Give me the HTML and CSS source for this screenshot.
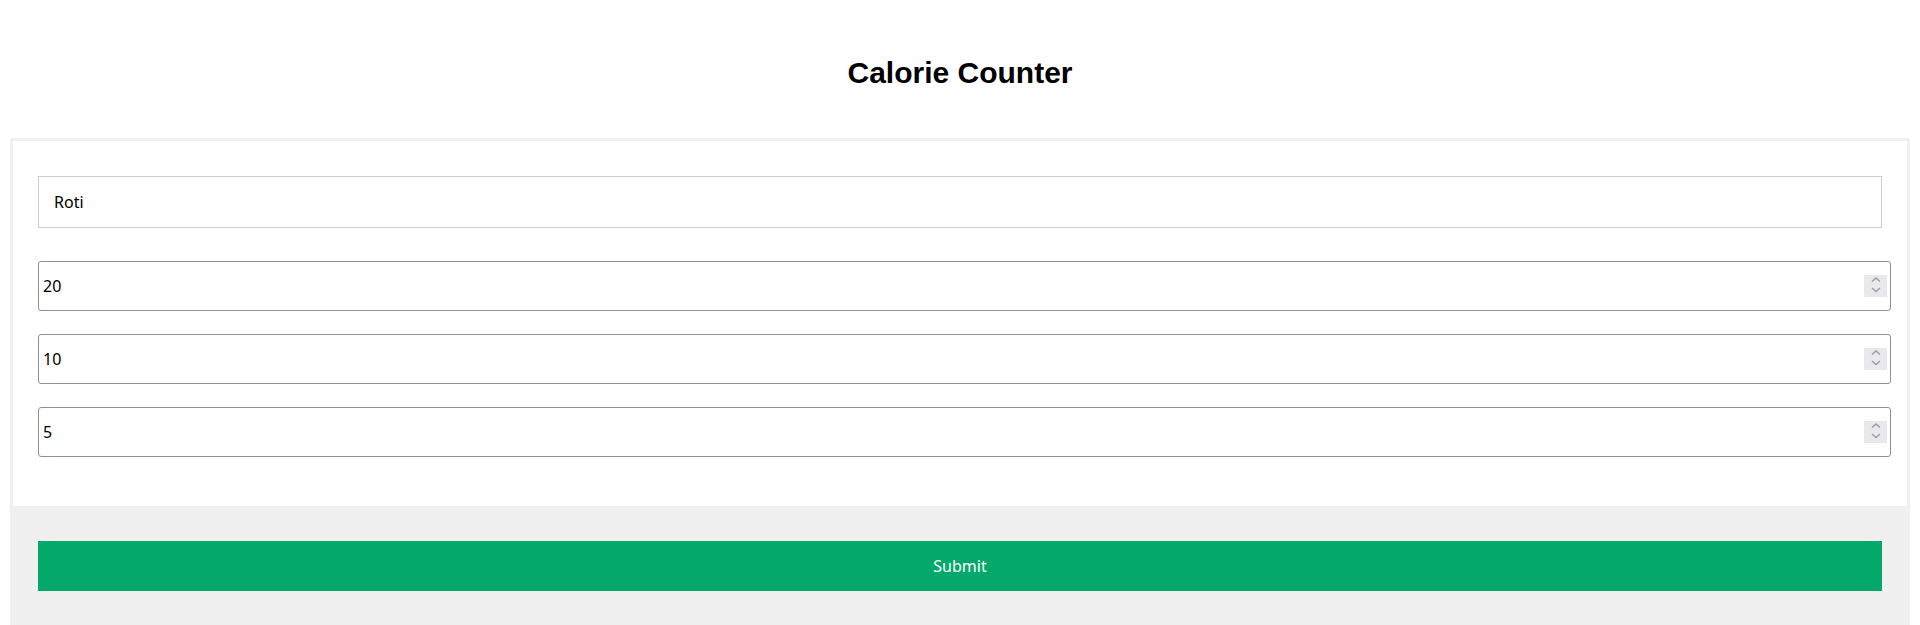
FILE: index.html
```html
<!DOCTYPE html>
<html lang="en">
<head>
<meta charset="utf-8">
<title>Calorie Counter</title>
<link rel="stylesheet" href="styles.css">
</head>
<body>
<header class="header">
  <h1 class="title">Calorie Counter</h1>
</header>
<form class="card">
  <div class="fields">
    <input class="text-input" type="text" value="Roti">
    <div class="num-field">
      <input class="num-input" type="number" value="20">
      <span class="spinner"><svg width="10" height="22" viewBox="0 0 10 22"><path d="M1 6.5 L5 3 L9 6.5" fill="none" stroke="#9a9aa6" stroke-width="1.4"/><path d="M1 13 L5 16.5 L9 13" fill="none" stroke="#9a9aa6" stroke-width="1.4"/></svg></span>
    </div>
    <div class="num-field">
      <input class="num-input" type="number" value="10">
      <span class="spinner"><svg width="10" height="22" viewBox="0 0 10 22"><path d="M1 6.5 L5 3 L9 6.5" fill="none" stroke="#9a9aa6" stroke-width="1.4"/><path d="M1 13 L5 16.5 L9 13" fill="none" stroke="#9a9aa6" stroke-width="1.4"/></svg></span>
    </div>
    <div class="num-field">
      <input class="num-input" type="number" value="5">
      <span class="spinner"><svg width="10" height="22" viewBox="0 0 10 22"><path d="M1 6.5 L5 3 L9 6.5" fill="none" stroke="#9a9aa6" stroke-width="1.4"/><path d="M1 13 L5 16.5 L9 13" fill="none" stroke="#9a9aa6" stroke-width="1.4"/></svg></span>
    </div>
  </div>
  <div class="footer">
    <button class="submit" type="button">Submit</button>
  </div>
</form>
</body>
</html>
```
FILE: styles.css
```css
* { box-sizing: border-box; }
html, body { margin: 0; padding: 0; background: #fff; }
body {
  font-family: "Noto Sans", "Open Sans", sans-serif;
  font-size: 16px;
  color: #000;
}
.header {
  padding: 56px 0 48px;
  text-align: center;
}
.title {
  margin: 0;
  font-family: "Liberation Sans", Arial, sans-serif;
  font-size: 30px;
  font-weight: bold;
  line-height: 34px;
}
.card {
  margin: 0 10px;
  border: 3px solid #f0f0f0;
  border-bottom: 0;
}
.fields {
  display: flex;
  flex-direction: column;
  align-items: flex-start;
  padding: 35px 25px 49px;
}
.text-input {
  width: 100%;
  height: 52px;
  margin: 0 0 33px;
  padding: 0 15px;
  border: 1px solid #cccccc;
  border-radius: 0;
  font-family: inherit;
  font-size: 16px;
  color: #000;
  background: #fff;
  outline: none;
}
.num-field {
  width: calc(100% + 9px);
  height: 50px;
  margin-bottom: 23px;
  display: flex;
  align-items: center;
  border: 1px solid #8f8f9d;
  border-radius: 3px;
  background: #fff;
  padding: 0 3px 0 4px;
}
.num-field:last-child { margin-bottom: 0; }
.num-input {
  flex: 1;
  min-width: 0;
  height: 100%;
  border: 0;
  padding: 0;
  font-family: inherit;
  font-size: 16px;
  color: #000;
  background: transparent;
  outline: none;
  -moz-appearance: textfield;
}
.num-input::-webkit-inner-spin-button,
.num-input::-webkit-outer-spin-button {
  -webkit-appearance: none;
  margin: 0;
}
.spinner {
  width: 23px;
  height: 22px;
  background: #e9e9ed;
  display: flex;
  align-items: center;
  justify-content: center;
}
.footer {
  background: #f0f0f0;
  margin: 0 -3px;
  padding: 35px 28px 34px;
}
.submit {
  display: block;
  width: 100%;
  height: 50px;
  border: 0;
  background: #04a86b;
  color: #fff;
  font-family: inherit;
  font-size: 16px;
  cursor: pointer;
}
```
